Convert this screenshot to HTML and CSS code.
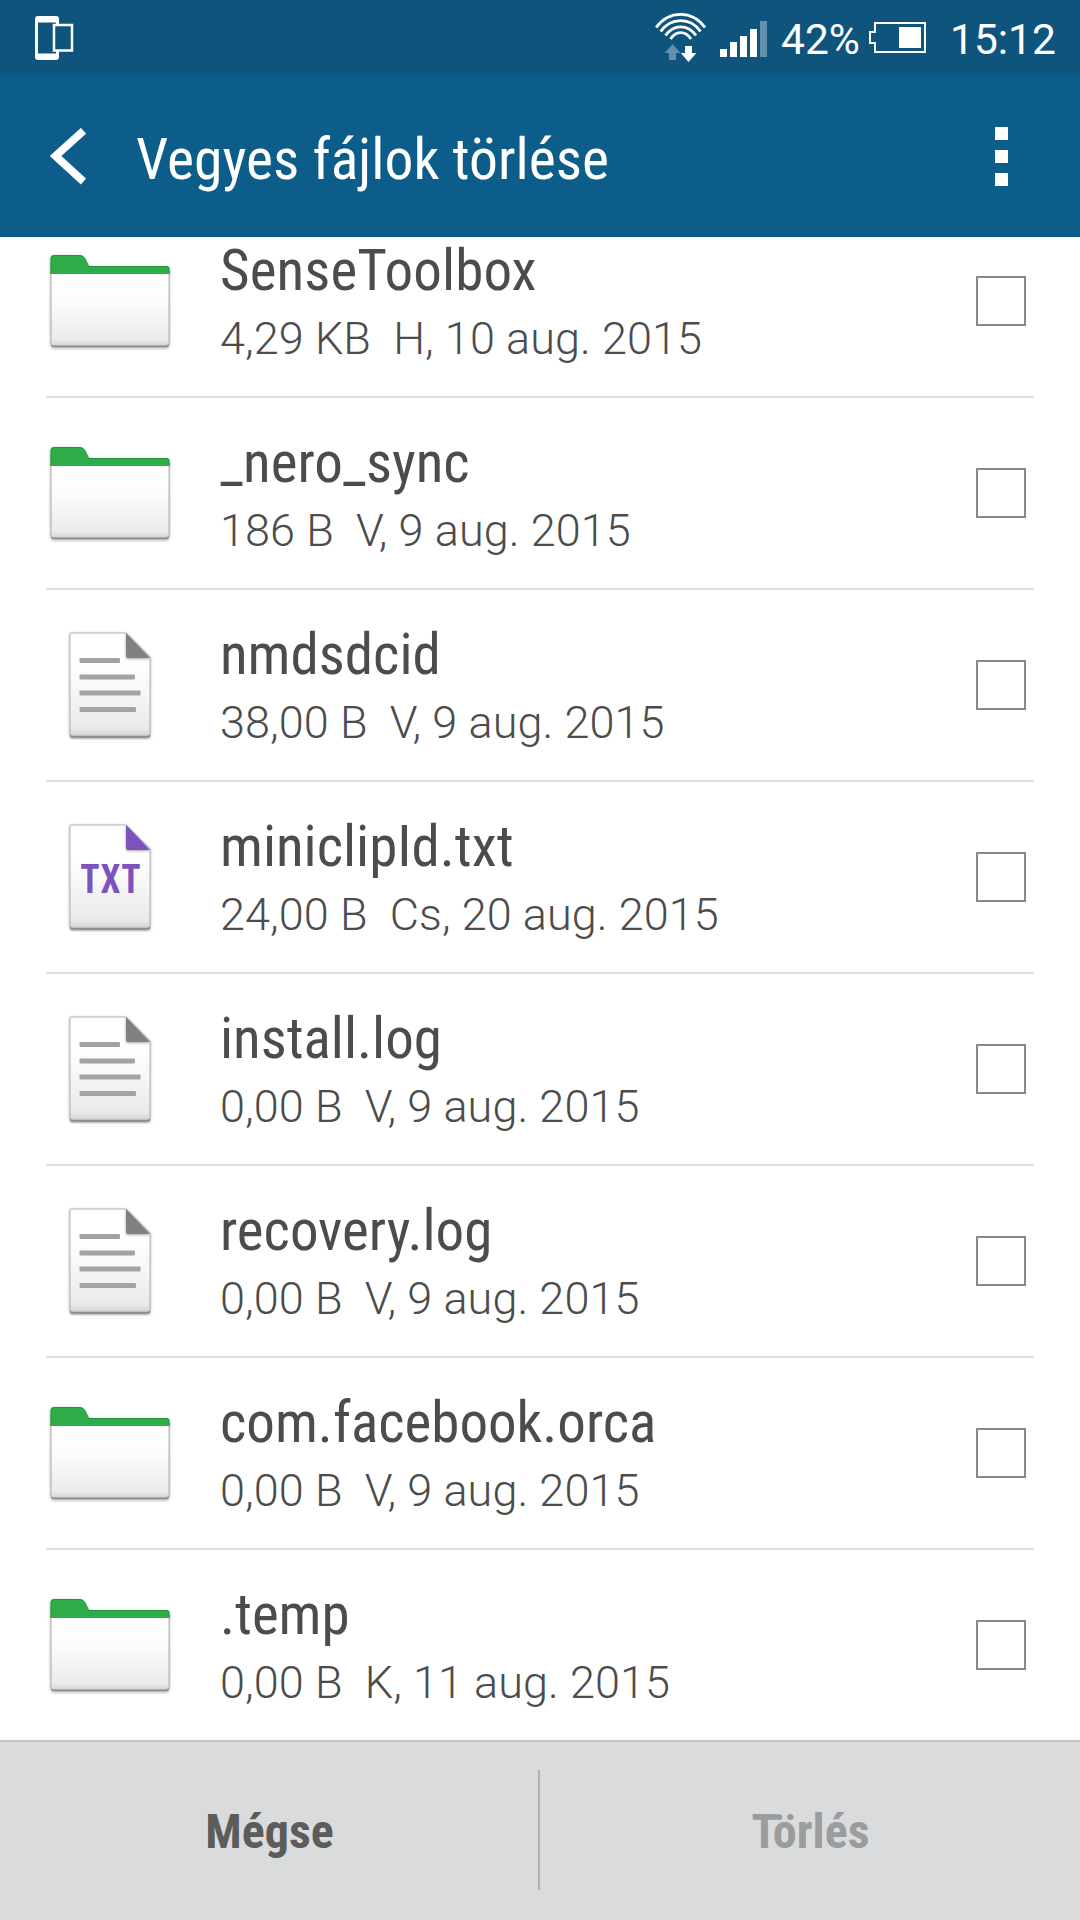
FILE: index.html
```html
<!DOCTYPE html>
<html lang="hu">
<head>
<meta charset="utf-8">
<title>Vegyes fájlok törlése</title>
<link rel="stylesheet" href="styles.css">
</head>
<body>
<svg width="0" height="0" class="defs" aria-hidden="true">
  <defs>
    <linearGradient id="paper" x1="0" y1="0" x2="0" y2="1">
      <stop offset="0.3" stop-color="#fff"/><stop offset="0.9" stop-color="#ebebeb"/><stop offset="0.97" stop-color="#dcdcdc"/><stop offset="1" stop-color="#a8a8a8"/>
    </linearGradient>
    <filter id="shadow" x="-10%" y="-10%" width="120%" height="120%">
      <feDropShadow dx="0" dy="1" stdDeviation="1.5" flood-color="#000" flood-opacity="0.35"/>
    </filter>
    <symbol id="folder" viewBox="0 0 130 110">
      <g filter="url(#shadow)">
        <path d="M6 25H124V97.500Q124 100.500 121 100.500H9Q6 100.500 6 97.500Z" fill="url(#paper)" stroke="#999" stroke-opacity=".75"/>
        <path d="M6.500 99.500Q7 100.500 9 100.500H121Q123 100.500 123.500 99" fill="none" stroke="#888" stroke-width="1.500"/>
        <path d="M5.500 28V13Q5.500 9 9.500 9H34.500Q38.500 9 40.500 13L44 20H121.500Q124.500 20 124.500 23V28Z" fill="#2dac48"/>
        <path d="M6 28V13Q6 9.500 9.500 9.500H34.500Q38 9.500 40 13.500L43.500 20.500H121.500Q124 20.500 124 23V28" fill="none" stroke="#1d8a37" stroke-opacity=".6"/>
      </g>
    </symbol>
    <symbol id="sheet" viewBox="0 0 130 110">
      <g filter="url(#shadow)">
        <path d="M26 3H81L105 27V105Q105 107 103 107H27Q25 107 25 105V4Q25 3 26 3Z" fill="url(#paper)" stroke="#999" stroke-opacity=".7"/>
        <path d="M25.500 105.500Q26 107 28 107H102Q104.500 107 104.500 105" fill="none" stroke="#888" stroke-width="1.500"/>
      </g>
      <path d="M81 3V26Q81 28 83 28H105Z" filter="url(#shadow)" fill="currentColor"/>
    </symbol>
    <symbol id="doc" viewBox="0 0 130 110">
      <use href="#sheet" width="130" height="110"/>
      <g fill="#a3a3a3"><rect x="34.500" y="28" width="40.500" height="5" rx="1"/><rect x="34.500" y="44.500" width="55.500" height="5" rx="1"/><rect x="34.500" y="60.500" width="61" height="5" rx="1"/><rect x="34.500" y="77" width="56.500" height="5" rx="1"/></g>
    </symbol>
  </defs>
</svg>

<div class="screen">
  <header class="status">
    <svg class="devices" width="40" height="46" viewBox="0 0 40 46">
      <path fill="#fff" fill-rule="evenodd" d="M3 0H21Q24 0 24 3V41Q24 44 21 44H3Q0 44 0 41V3Q0 0 3 0ZM3 6.500V37.500H21V6.500Z"/>
      <rect x="19" y="9" width="18" height="25.500" fill="#0e547d" stroke="#fff" stroke-width="2.500"/>
    </svg>
    <svg class="wifi" width="54" height="52" viewBox="0 0 54 52">
      <g fill="none" stroke="#fff" stroke-width="2.900">
        <path d="M1.200 16.500C14-1 37-1 50 16.500"/><path d="M5.700 20.500C16 6 35.500 6 45.500 20.500"/><path d="M10.500 24.500C19 13 32.500 13 41 24.500"/><path d="M15.500 28C21 19.500 30.500 19.500 36 28"/>
      </g>
      <path fill="#628fab" d="M17.600 33L25.500 42H21V49H14V42H9.800Z"/>
      <path fill="#fff" d="M33.500 51L41.400 42H37V35H30V42H25.800Z"/>
    </svg>
    <svg class="signal" width="47" height="36" viewBox="0 0 47 36">
      <path fill="#fff" d="M0 28h7v8H0zM10 21h7v15h-7zM20 15h7v21h-7zM30 8h7v28h-7z"/><path fill="#628fab" d="M40 0h7v36h-7z"/>
    </svg>
    <span class="percent">42%</span>
    <svg class="battery" width="57" height="31" viewBox="0 0 57 31">
      <path d="M6 1H56V30H6V21H1V10H6Z" fill="none" stroke="#fff" stroke-width="2"/><path fill="#fff" d="M30 5h22v21H30z"/>
    </svg>
    <span class="clock">15:12</span>
  </header>

  <nav class="bar">
    <svg class="back" width="36" height="57" viewBox="0 0 36 57"><path d="M33.500 2.800L5.500 28L33.500 53.500" fill="none" stroke="#fff" stroke-width="7.800"/></svg>
    <h1 class="title">Vegyes fájlok törlése</h1>
    <div class="more"><i></i><i></i><i></i></div>
  </nav>

  <main class="list">
    <div class="row"><svg class="icon"><use href="#folder"/></svg><div class="info"><div class="name">SenseToolbox</div><div class="meta">4,29 KB&nbsp; H, 10 aug. 2015</div></div><span class="check"></span></div>
    <div class="row"><svg class="icon"><use href="#folder"/></svg><div class="info"><div class="name">_nero_sync</div><div class="meta">186 B&nbsp; V, 9 aug. 2015</div></div><span class="check"></span></div>
    <div class="row"><svg class="icon"><use href="#doc"/></svg><div class="info"><div class="name">nmdsdcid</div><div class="meta">38,00 B&nbsp; V, 9 aug. 2015</div></div><span class="check"></span></div>
    <div class="row"><svg class="icon txt" viewBox="0 0 130 110"><use href="#sheet"/><text class="tag" transform="translate(35.300 71.300) scale(.86 1)" textLength="70" lengthAdjust="spacing">TXT</text></svg><div class="info"><div class="name">miniclipId.txt</div><div class="meta">24,00 B&nbsp; Cs, 20 aug. 2015</div></div><span class="check"></span></div>
    <div class="row"><svg class="icon"><use href="#doc"/></svg><div class="info"><div class="name">install.log</div><div class="meta">0,00 B&nbsp; V, 9 aug. 2015</div></div><span class="check"></span></div>
    <div class="row"><svg class="icon"><use href="#doc"/></svg><div class="info"><div class="name">recovery.log</div><div class="meta">0,00 B&nbsp; V, 9 aug. 2015</div></div><span class="check"></span></div>
    <div class="row"><svg class="icon"><use href="#folder"/></svg><div class="info"><div class="name">com.facebook.orca</div><div class="meta">0,00 B&nbsp; V, 9 aug. 2015</div></div><span class="check"></span></div>
    <div class="row"><svg class="icon"><use href="#folder"/></svg><div class="info"><div class="name">.temp</div><div class="meta">0,00 B&nbsp; K, 11 aug. 2015</div></div><span class="check"></span></div>
  </main>

  <footer class="actions">
    <button class="action"><span>Mégse</span></button>
    <i class="split"></i>
    <button class="action off" disabled><span>Törlés</span></button>
  </footer>
</div>
</body>
</html>
```
FILE: styles.css
```css
* { box-sizing: border-box; }
body { margin: 0; background: #fff; font-family: "Roboto", sans-serif; }
svg { display: block; flex: none; }
.defs { position: absolute; }
.screen { width: 1080px; height: 1920px; display: flex; flex-direction: column; overflow: hidden; }

.status { height: 75px; flex: none; background: #0e547d; color: #fff; display: flex; align-items: flex-start; font-size: 42.500px; line-height: 50px; }
.devices { margin: 16px 0 0 35px; }
.wifi { margin: 11px 0 0 580px; }
.signal { margin: 21px 0 0 11px; }
.percent { margin: 15px 0 0 14px; width: 82px; }
.battery { margin: 22px 0 0 6px; }
.clock { margin: 15px 0 0 24px; }

.bar { height: 162px; flex: none; background: #0d5d8a; color: #fff; display: flex; align-items: center; padding: 0 72px 0 50px; }
.title { margin: 8px 0 0 50px; flex: 1; font-size: 57.600px; line-height: 70px; font-weight: 400; font-stretch: 75%; white-space: nowrap; }
.more { display: grid; gap: 10px; }
.more i { width: 13px; height: 13px; background: #fff; }

.list { flex: 1; min-height: 0; overflow: hidden; padding: 0 46px; background: #fff; }
.row { height: 192px; border-bottom: 2px solid #dedede; display: flex; align-items: center; padding-right: 8px; color: #4c4c4c; }
.row:first-child { margin-top: -31px; }
.row:last-child { border-bottom-color: transparent; }
.icon { width: 130px; height: 110px; margin-left: -1px; color: #808080; overflow: visible; }
.txt { color: #7b53bd; }
.tag { font-size: 41.500px; font-weight: 700; font-stretch: 75%; fill: currentColor; }
.info { flex: 1; margin-left: 45px; white-space: nowrap; }
.name { font-size: 57px; line-height: 74px; font-stretch: 75%; }
.row:first-child .name { letter-spacing: .15px; }
.meta { padding-top: 1px; margin-bottom: -1px; font-size: 45px; line-height: 60px; font-weight: 300; letter-spacing: .08px; }
.check { width: 50px; height: 50px; border: 2px solid #888; }

.actions { height: 180px; flex: none; background: #dadbdd; border-top: 2px solid #c4c4c4; display: flex; align-items: center; }
.action { flex: 1; border: 0; background: none; padding: 2px 0 0; font: 700 48px/60px "Roboto", sans-serif; font-stretch: 75%; color: #5c5c5b; }
.off { color: #9b9c9e; }
.split { width: 2px; height: 120px; margin: -2px 1px 0 -1px; background: #b0b1b3; }
```
